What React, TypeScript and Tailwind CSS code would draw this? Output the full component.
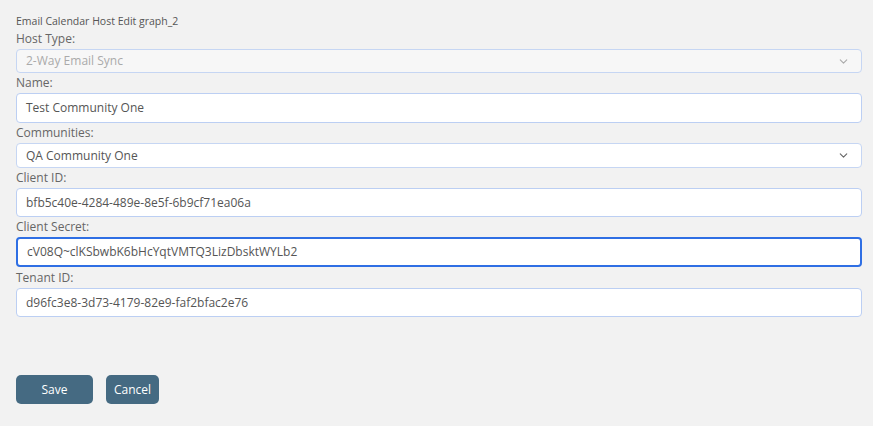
import { ChevronDown } from 'lucide-react';

const font = { fontFamily: '"Open Sans", "Liberation Sans", sans-serif' };

function Label({ children, className = 'h-5' }: { children: string; className?: string }) {
  return <div className={`${className} flex items-center text-[12px] text-[#666]`}>{children}</div>;
}

function Input({ value, h, focused }: { value: string; h: string; focused?: boolean }) {
  return (
    <div
      className={`${h} flex items-center rounded-[4px] bg-white pl-[9px] text-[12px] text-[#555] ${
        focused ? 'border-2 border-[#2f6fe4] pl-[8px]' : 'border border-[#bccff3]'
      }`}
    >
      {value}
    </div>
  );
}

function Select({ value, h, disabled }: { value: string; h: string; disabled?: boolean }) {
  return (
    <div
      className={`${h} flex items-center justify-between rounded-[4px] border border-[#c6d6f3] pl-[9px] pr-[11px] text-[12px] ${
        disabled ? 'bg-[#f7f7f7] text-[#aaa]' : 'bg-white text-[#555]'
      }`}
    >
      <span>{value}</span>
      <ChevronDown className={`h-[13px] w-[13px] ${disabled ? 'text-[#aaa]' : 'text-[#666]'}`} strokeWidth={2} />
    </div>
  );
}

export default function App() {
  return (
    <div className="min-h-[426px] w-full bg-[#f2f2f2] pl-4 pr-[11px] pt-[14px]" style={font}>
      <div className="h-[14px] text-[10.5px] leading-[14px] text-[#555]">Email Calendar Host Edit graph_2</div>
      <Label className="h-[21px]">Host Type:</Label>
      <Select value="2-Way Email Sync" h="h-[24px]" disabled />
      <Label>Name:</Label>
      <Input value="Test Community One" h="h-[30px]" />
      <Label>Communities:</Label>
      <Select value="QA Community One" h="h-[25px]" />
      <Label>Client ID:</Label>
      <Input value="bfb5c40e-4284-489e-8e5f-6b9cf71ea06a" h="h-[29px]" />
      <Label>Client Secret:</Label>
      <Input value="cV08Q~clKSbwbK6bHcYqtVMTQ3LizDbsktWYLb2" h="h-[30px]" focused />
      <Label className="h-[21px]">Tenant ID:</Label>
      <Input value="d96fc3e8-3d73-4179-82e9-faf2bfac2e76" h="h-[29px]" />
      <div className="mt-[58px] flex gap-[13px]">
        <button className="h-[29px] w-[77px] rounded-[5px] bg-[#456a82] text-[12px] text-white">Save</button>
        <button className="h-[29px] w-[53px] rounded-[5px] bg-[#456a82] text-[12px] text-white">Cancel</button>
      </div>
    </div>
  );
}
